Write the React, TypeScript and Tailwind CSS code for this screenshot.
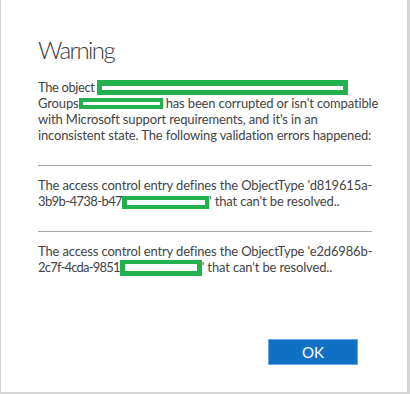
import * as React from 'react';

type Box = { w: number; h: number; t: number; r: number; b: number; l: number; va: string };

function Redact({ w, h, t, r, b, l, va }: Box) {
  return (
    <span
      className={`inline-block bg-white border-solid border-[#22b14c] ${va}`}
      style={{ width: w, height: h, borderWidth: `${t}px ${r}px ${b}px ${l}px` }}
    />
  );
}

const body = "text-[13px] leading-[16px] tracking-[-0.15px] font-['Lato',sans-serif] whitespace-nowrap";

export default function App() {
  return (
    <div className="w-[410px] h-[394px] bg-white border-l border-b-2 border-r-[3px] border-[#d4d4d4] text-[#444444]">
      <div className="pl-[37px] pr-[35px] pt-[34px]">
        <h1 className="text-[24px] font-light leading-[32px] tracking-[-1.6px] text-[#3a3a3a] font-['Lato',sans-serif]">
          Warning
        </h1>
        <div className={`mt-[13px] ${body}`}>
          <div>
            <span className="tracking-[-0.4px]">The object </span>
            <Redact w={251} h={15} t={6} r={5} b={5} l={5} va="align-[-3px]" />
          </div>
          <div>
            Groups<Redact w={84} h={11} t={4} r={3} b={4} l={4} va="align-[-1px]" /> has been corrupted or isn't compatible
          </div>
          <div>with Microsoft support requirements, and it's in an</div>
          <div>inconsistent state. The following validation errors happened:</div>
        </div>
        <div className="mt-[22px] border-t border-[#a6a6a6]" />
        <div className={`mt-[11px] ${body}`}>
          <div>The access control entry defines the ObjectType 'd819615a-</div>
          <div>
            <span className="tracking-[-0.6px]">3b9b-4738-b47</span>
            <Redact w={87} h={13} t={4} r={4} b={4} l={5} va="align-[-3px]" />' that can't be resolved..
          </div>
        </div>
        <div className="mt-[22px] border-t border-[#a6a6a6]" />
        <div className={`mt-[11px] ${body}`}>
          <div>The access control entry defines the ObjectType 'e2d6986b-</div>
          <div>
            <span className="tracking-[-0.8px]">2c7f-4cda-9851</span>
            <Redact w={82} h={16} t={4} r={5} b={5} l={5} va="align-[-4px]" />' that can't be resolved..
          </div>
        </div>
        <div className="mt-[63px] flex justify-end pr-[14px]">
          <button className="w-[90px] h-[26px] bg-[#1070c4] border border-[#6aa6e8] text-white text-[15px] leading-none font-['Lato',sans-serif]">
            OK
          </button>
        </div>
      </div>
    </div>
  );
}
